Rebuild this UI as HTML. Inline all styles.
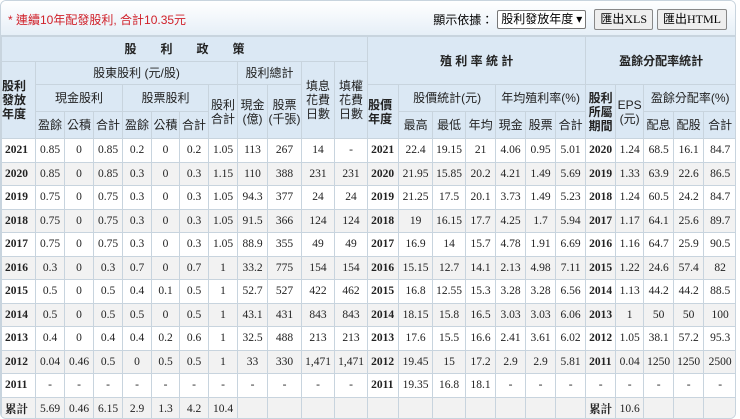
<!DOCTYPE html>
<html><head><meta charset="utf-8"><style>
body{margin:0;background:#fff;width:740px;height:419px;overflow:hidden;font-family:"Liberation Serif","Noto Serif CJK SC","Noto Sans CJK TC",serif;}
.box{position:absolute;left:0;top:0;width:734px;height:417px;border:1px solid #c8d4de;border-radius:6px;overflow:hidden;}
.bar{height:34px;background:linear-gradient(#fff,#e6eff7);border-bottom:1px solid #c8d4de;position:relative;}
.note{position:absolute;left:7px;top:10px;color:#d0212a;font-size:12px;font-family:"Liberation Sans","Noto Sans CJK TC",sans-serif;}
.ctl{position:absolute;right:8px;top:8px;font-size:12px;font-family:"Liberation Serif","Noto Sans CJK TC",serif;display:flex;align-items:center;gap:4px}
.sel{border:1px solid #777;background:#fff;padding:0 3px;height:17px;line-height:17px;border-radius:2px;margin-right:4px}
.btn{border:1px solid #888;background:#eee;padding:0 5px;height:19px;line-height:19px;border-radius:2px}
table{border-collapse:collapse;table-layout:fixed;width:735px;font-size:11.5px;}
td,th{border:1px solid #c8d4de;text-align:center;padding:0;overflow:hidden;white-space:nowrap}
th{background:#dbe8f4;font-weight:normal;color:#222;font-family:"Liberation Sans","Noto Sans CJK TC",sans-serif;font-size:12px;line-height:14px}
th.b{font-weight:bold}
tbody td{height:22.5px;color:#222}
tbody tr:nth-child(even) td{background:#f2f2f2}
td.y{font-weight:bold;text-align:left;padding-left:3px}
</style></head><body>
<div class="box">
<div class="bar"><span class="note">* 連續10年配發股利, 合計10.35元</span>
<div class="ctl"><span>顯示依據：</span><span class="sel">股利發放年度 ▾</span><span class="btn">匯出XLS</span><span class="btn">匯出HTML</span></div></div>
<table>
<colgroup><col style="width:34px"><col style="width:29px"><col style="width:29px"><col style="width:29px"><col style="width:29px"><col style="width:28px"><col style="width:29px"><col style="width:29px"><col style="width:30px"><col style="width:34px"><col style="width:33px"><col style="width:33px"><col style="width:31px"><col style="width:34px"><col style="width:33px"><col style="width:30px"><col style="width:30px"><col style="width:30px"><col style="width:30px"><col style="width:30px"><col style="width:28px"><col style="width:30px"><col style="width:30px"><col style="width:33px"></colgroup>
<thead>
<tr style="height:25px"><th class="b" colspan="12">股　　利　　政　　策</th><th class="b" colspan="7" rowspan="2">殖 利 率 統 計</th><th class="b" colspan="5" rowspan="2">盈餘分配率統計</th></tr>
<tr style="height:23px"><th class="b" rowspan="3" style="text-align:left">股利<br>發放<br>年度</th><th colspan="7">股東股利 (元/股)</th><th colspan="2">股利總計</th><th rowspan="3">填息<br>花費<br>日數</th><th rowspan="3">填權<br>花費<br>日數</th></tr>
<tr style="height:27px"><th colspan="3">現金股利</th><th colspan="3">股票股利</th><th rowspan="2">股利<br>合計</th><th rowspan="2">現金<br>(億)</th><th rowspan="2">股票<br>(千張)</th><th class="b" rowspan="2" style="text-align:left">股價<br>年度</th><th colspan="3">股價統計(元)</th><th colspan="3">年均殖利率(%)</th><th class="b" rowspan="2">股利<br>所屬<br>期間</th><th rowspan="2">EPS<br>(元)</th><th colspan="3">盈餘分配率(%)</th></tr>
<tr style="height:27px"><th>盈餘</th><th>公積</th><th>合計</th><th>盈餘</th><th>公積</th><th>合計</th><th>最高</th><th>最低</th><th>年均</th><th>現金</th><th>股票</th><th>合計</th><th>配息</th><th>配股</th><th>合計</th></tr>
</thead>
<tbody>
<tr><td class="y">2021</td><td>0.85</td><td>0</td><td>0.85</td><td>0.2</td><td>0</td><td>0.2</td><td>1.05</td><td>113</td><td>267</td><td>14</td><td>-</td><td class="y">2021</td><td>22.4</td><td>19.15</td><td>21</td><td>4.06</td><td>0.95</td><td>5.01</td><td class="y">2020</td><td>1.24</td><td>68.5</td><td>16.1</td><td>84.7</td></tr>
<tr><td class="y">2020</td><td>0.85</td><td>0</td><td>0.85</td><td>0.3</td><td>0</td><td>0.3</td><td>1.15</td><td>110</td><td>388</td><td>231</td><td>231</td><td class="y">2020</td><td>21.95</td><td>15.85</td><td>20.2</td><td>4.21</td><td>1.49</td><td>5.69</td><td class="y">2019</td><td>1.33</td><td>63.9</td><td>22.6</td><td>86.5</td></tr>
<tr><td class="y">2019</td><td>0.75</td><td>0</td><td>0.75</td><td>0.3</td><td>0</td><td>0.3</td><td>1.05</td><td>94.3</td><td>377</td><td>24</td><td>24</td><td class="y">2019</td><td>21.25</td><td>17.5</td><td>20.1</td><td>3.73</td><td>1.49</td><td>5.23</td><td class="y">2018</td><td>1.24</td><td>60.5</td><td>24.2</td><td>84.7</td></tr>
<tr><td class="y">2018</td><td>0.75</td><td>0</td><td>0.75</td><td>0.3</td><td>0</td><td>0.3</td><td>1.05</td><td>91.5</td><td>366</td><td>124</td><td>124</td><td class="y">2018</td><td>19</td><td>16.15</td><td>17.7</td><td>4.25</td><td>1.7</td><td>5.94</td><td class="y">2017</td><td>1.17</td><td>64.1</td><td>25.6</td><td>89.7</td></tr>
<tr><td class="y">2017</td><td>0.75</td><td>0</td><td>0.75</td><td>0.3</td><td>0</td><td>0.3</td><td>1.05</td><td>88.9</td><td>355</td><td>49</td><td>49</td><td class="y">2017</td><td>16.9</td><td>14</td><td>15.7</td><td>4.78</td><td>1.91</td><td>6.69</td><td class="y">2016</td><td>1.16</td><td>64.7</td><td>25.9</td><td>90.5</td></tr>
<tr><td class="y">2016</td><td>0.3</td><td>0</td><td>0.3</td><td>0.7</td><td>0</td><td>0.7</td><td>1</td><td>33.2</td><td>775</td><td>154</td><td>154</td><td class="y">2016</td><td>15.15</td><td>12.7</td><td>14.1</td><td>2.13</td><td>4.98</td><td>7.11</td><td class="y">2015</td><td>1.22</td><td>24.6</td><td>57.4</td><td>82</td></tr>
<tr><td class="y">2015</td><td>0.5</td><td>0</td><td>0.5</td><td>0.4</td><td>0.1</td><td>0.5</td><td>1</td><td>52.7</td><td>527</td><td>422</td><td>462</td><td class="y">2015</td><td>16.8</td><td>12.55</td><td>15.3</td><td>3.28</td><td>3.28</td><td>6.56</td><td class="y">2014</td><td>1.13</td><td>44.2</td><td>44.2</td><td>88.5</td></tr>
<tr><td class="y">2014</td><td>0.5</td><td>0</td><td>0.5</td><td>0.5</td><td>0</td><td>0.5</td><td>1</td><td>43.1</td><td>431</td><td>843</td><td>843</td><td class="y">2014</td><td>18.15</td><td>15.8</td><td>16.5</td><td>3.03</td><td>3.03</td><td>6.06</td><td class="y">2013</td><td>1</td><td>50</td><td>50</td><td>100</td></tr>
<tr><td class="y">2013</td><td>0.4</td><td>0</td><td>0.4</td><td>0.4</td><td>0.2</td><td>0.6</td><td>1</td><td>32.5</td><td>488</td><td>213</td><td>213</td><td class="y">2013</td><td>17.6</td><td>15.5</td><td>16.6</td><td>2.41</td><td>3.61</td><td>6.02</td><td class="y">2012</td><td>1.05</td><td>38.1</td><td>57.2</td><td>95.3</td></tr>
<tr><td class="y">2012</td><td>0.04</td><td>0.46</td><td>0.5</td><td>0</td><td>0.5</td><td>0.5</td><td>1</td><td>33</td><td>330</td><td>1,471</td><td>1,471</td><td class="y">2012</td><td>19.45</td><td>15</td><td>17.2</td><td>2.9</td><td>2.9</td><td>5.81</td><td class="y">2011</td><td>0.04</td><td>1250</td><td>1250</td><td>2500</td></tr>
<tr><td class="y">2011</td><td>-</td><td>-</td><td>-</td><td>-</td><td>-</td><td>-</td><td>-</td><td>-</td><td>-</td><td>-</td><td>-</td><td class="y">2011</td><td>19.35</td><td>16.8</td><td>18.1</td><td>-</td><td>-</td><td>-</td><td>-</td><td>-</td><td>-</td><td>-</td><td>-</td></tr>
<tr><td class="y">累計</td><td>5.69</td><td>0.46</td><td>6.15</td><td>2.9</td><td>1.3</td><td>4.2</td><td>10.4</td><td></td><td></td><td></td><td></td><td></td><td></td><td></td><td></td><td></td><td></td><td></td><td class="y">累計</td><td>10.6</td><td></td><td></td><td></td></tr>
</tbody></table></div>
</body></html>
